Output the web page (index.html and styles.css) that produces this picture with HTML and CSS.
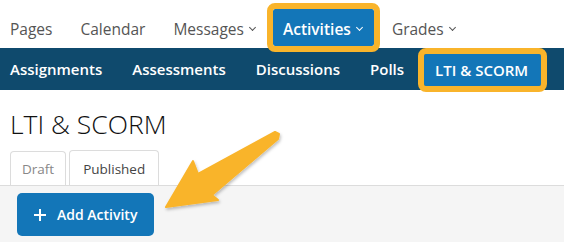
FILE: index.html
```html
<!DOCTYPE html>
<html lang="en">
<head>
    <meta charset="UTF-8">
    <meta name="viewport" content="width=device-width, initial-scale=1.0">
    <title>LTI &amp; SCORM</title>
    <link rel="stylesheet" href="styles.css">
</head>
<body>
    <div class="page">
        <nav class="main-nav">
            <a class="main-nav-item">Pages</a>
            <a class="main-nav-item">Calendar</a>
            <a class="main-nav-item">Messages <span class="caret"></span></a>
            <a class="main-nav-item active highlight">Activities <span class="caret"></span></a>
            <a class="main-nav-item">Grades <span class="caret"></span></a>
        </nav>

        <nav class="sub-nav">
            <a class="sub-nav-item">Assignments</a>
            <a class="sub-nav-item">Assessments</a>
            <a class="sub-nav-item">Discussions</a>
            <a class="sub-nav-item">Polls</a>
            <a class="sub-nav-item active highlight">LTI &amp; SCORM</a>
        </nav>

        <h1 class="page-title">LTI &amp; SCORM</h1>

        <div class="tabs">
            <a class="tab">Draft</a>
            <a class="tab active">Published</a>
        </div>

        <div class="tab-panel">
            <button class="button">
                <svg class="button-icon" viewBox="0 0 12 12" fill="none" stroke="currentColor" stroke-width="2">
                    <path d="M6 0v12M0 6h12" />
                </svg>
                Add Activity
            </button>
        </div>

        <!-- callout arrow pointing at the button -->
        <svg class="callout-arrow" width="564" height="242" viewBox="0 0 564 242">
            <defs>
                <filter id="arrowShadow" x="-20%" y="-20%" width="140%" height="140%">
                    <feDropShadow dx="1" dy="2" stdDeviation="1.5" flood-color="#000" flood-opacity="0.25" />
                </filter>
            </defs>
            <polygon points="275,132 279,134 278,139 212,195 218,200 166,207 193,161 198,174"
                     fill="#f9b42b" stroke="#f9b42b" stroke-width="2" stroke-linejoin="round"
                     filter="url(#arrowShadow)" />
        </svg>
    </div>
</body>
</html>
```

FILE: styles.css
```css
:root {
    /* Colors */
    --nav-blue: #1376b8;
    --nav-dark: #0f4a6d;
    --highlight: #f9b42b;
    --text-primary: #222;
    --text-secondary: #555;
    --text-muted: #888;
    --panel-bg: #f5f5f5;
    --border-color: #dcdcdc;

    /* Typography */
    --font-family-base: 'Open Sans', 'Liberation Sans', sans-serif;
}

body {
    margin: 0;
    font-family: var(--font-family-base);
    color: var(--text-primary);
    background-color: white;
}

.page {
    position: relative;
    width: 564px;
    height: 242px;
    overflow: hidden;
}

a {
    text-decoration: none;
    cursor: pointer;
}

/* Main navigation */

.main-nav {
    display: flex;
    align-items: flex-start;
    gap: 8px;
    height: 48px;
    padding-top: 9px;
    box-sizing: border-box;
    position: relative;
    z-index: 1;
}

.main-nav-item {
    display: flex;
    align-items: center;
    height: 37px;
    padding: 2px 10px 0;
    box-sizing: border-box;
    font-size: 15.5px;
    color: var(--text-secondary);
}

.main-nav-item.active {
    background-color: var(--nav-blue);
    color: white;
    font-weight: 600;
    padding-right: 12px;
}

.caret {
    display: inline-block;
    width: 4px;
    height: 4px;
    margin: -3px 0 0 6px;
    border-right: 1.8px solid currentColor;
    border-bottom: 1.8px solid currentColor;
    transform: rotate(45deg);
}

/* Sub navigation */

.sub-nav {
    display: flex;
    align-items: stretch;
    gap: 10px;
    height: 42px;
    background-color: var(--nav-dark);
}

.sub-nav-item {
    display: flex;
    align-items: center;
    padding: 0 10px;
    font-size: 15px;
    font-weight: 600;
    color: white;
}

.sub-nav-item.active {
    background-color: var(--nav-blue);
    margin: 6px 0 4px;
    padding: 0 13px 0 11px;
}

/* orange annotation frame */
.highlight {
    outline: 6px solid var(--highlight);
    border-radius: 2px;
}

/* Page content */

.page-title {
    margin: 17px 0 0 10px;
    font-size: 26.5px;
    font-weight: 300;
    line-height: 34px;
    color: #111;
}

.tabs {
    display: flex;
    align-items: flex-end;
    gap: 3px;
    margin: 9px 0 0 10px;
}

.tab {
    padding: 7px 11px 6px;
    font-size: 13.5px;
    line-height: 20px;
    color: var(--text-muted);
    background-color: white;
    border: 1px solid var(--border-color);
    border-bottom: none;
    border-radius: 4px 4px 0 0;
}

.tab.active {
    padding: 8px 13px 6px;
    color: #444;
}

.tab-panel {
    height: 100px;
    padding: 7px 17px;
    background-color: var(--panel-bg);
    border-top: 1px solid var(--border-color);
}

.button {
    display: inline-flex;
    align-items: center;
    gap: 11px;
    height: 43px;
    padding: 0 17px;
    font-family: var(--font-family-base);
    font-size: 14px;
    font-weight: 600;
    color: white;
    background-color: var(--nav-blue);
    border: none;
    border-radius: 5px;
    cursor: pointer;
}

.button-icon {
    width: 12px;
    height: 12px;
}

.callout-arrow {
    position: absolute;
    left: 0;
    top: 0;
    pointer-events: none;
}
```
